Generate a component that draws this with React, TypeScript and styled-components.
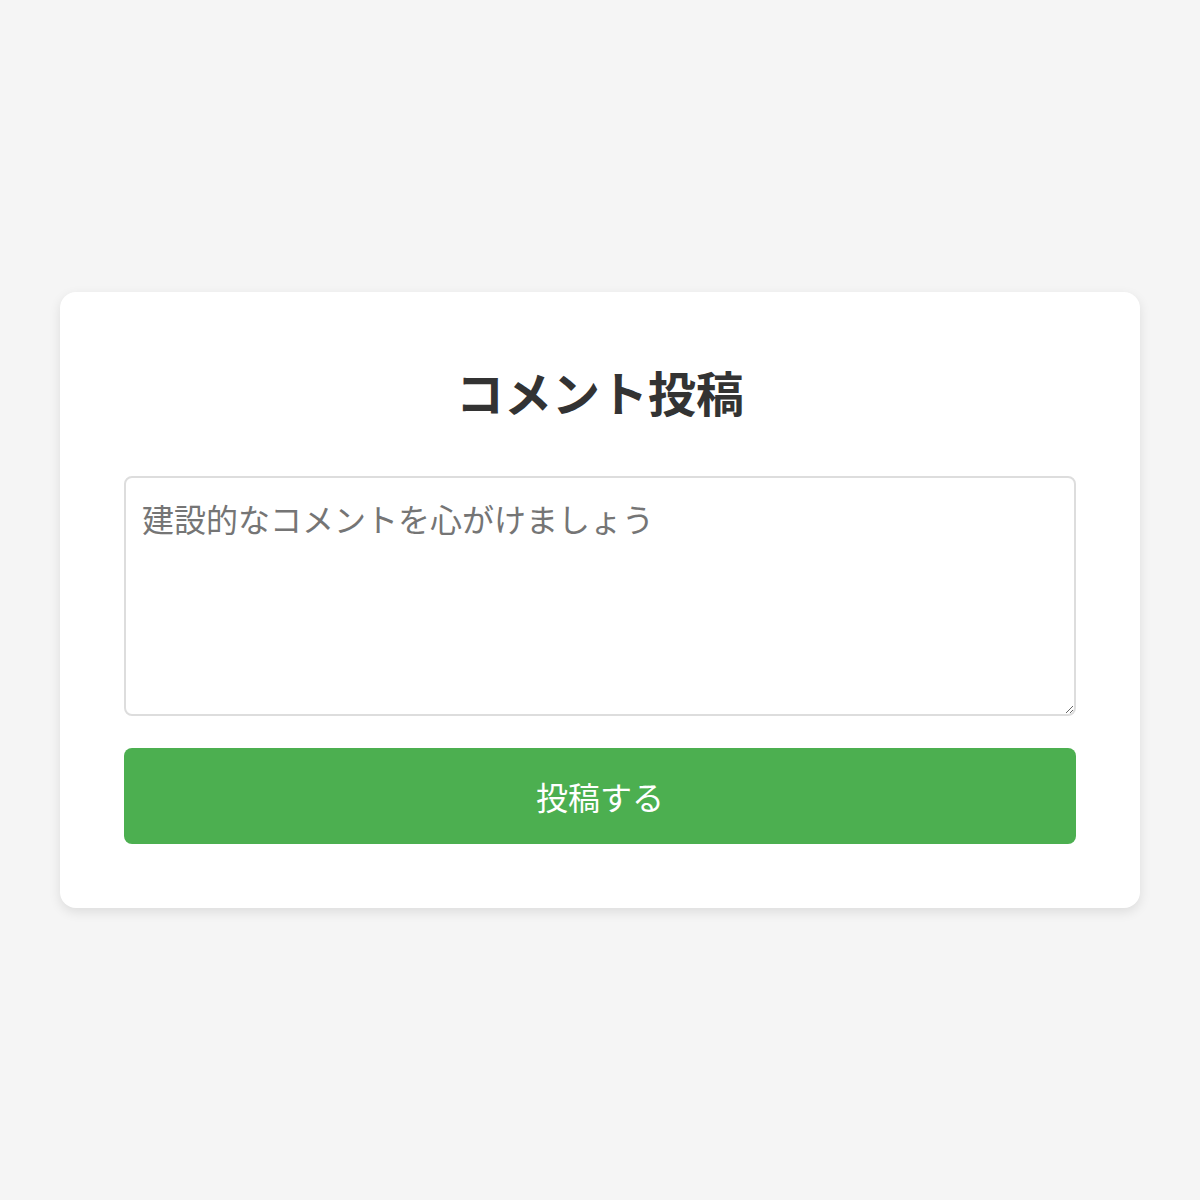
import React from "react";
import styled, { createGlobalStyle } from "styled-components";

const GlobalStyle = createGlobalStyle`
  * { box-sizing: border-box; }
  html, body { margin: 0; padding: 0; }
  body {
    background: #f5f5f5;
    font-family: "Noto Sans CJK JP", "Noto Sans", sans-serif;
  }
`;

const Page = styled.main`
  min-height: 100vh;
  display: flex;
  align-items: center;
  justify-content: center;
  padding: 0 60px;
`;

const Card = styled.section`
  width: 100%;
  max-width: 1080px;
  background: #ffffff;
  border-radius: 16px;
  box-shadow: 0 4px 12px rgba(0, 0, 0, 0.1);
  padding: 64px;
  display: flex;
  flex-direction: column;
`;

const Title = styled.h2`
  margin: 0 0 50px;
  text-align: center;
  font-size: 48px;
  line-height: 70px;
  font-weight: 700;
  color: #333333;
`;

const TextArea = styled.textarea`
  display: block;
  width: 100%;
  height: 240px;
  padding: 16px;
  border: 2px solid #dddddd;
  border-radius: 8px;
  font-family: "Noto Sans CJK JP", "Noto Sans", sans-serif;
  font-size: 32px;
  line-height: 48px;
  color: #333333;
  resize: vertical;
  outline: none;
  &::placeholder {
    color: #757575;
  }
`;

const SubmitButton = styled.button`
  margin-top: 32px;
  width: 100%;
  padding: 24px;
  border: none;
  border-radius: 8px;
  background: #4caf50;
  color: #ffffff;
  font-family: "Noto Sans CJK JP", "Noto Sans", sans-serif;
  font-size: 32px;
  line-height: 48px;
  cursor: pointer;
`;

export default function App() {
  return (
    <>
      <GlobalStyle />
      <Page>
        <Card>
          <Title>コメント投稿</Title>
          <TextArea placeholder="建設的なコメントを心がけましょう" />
          <SubmitButton type="button">投稿する</SubmitButton>
        </Card>
      </Page>
    </>
  );
}
